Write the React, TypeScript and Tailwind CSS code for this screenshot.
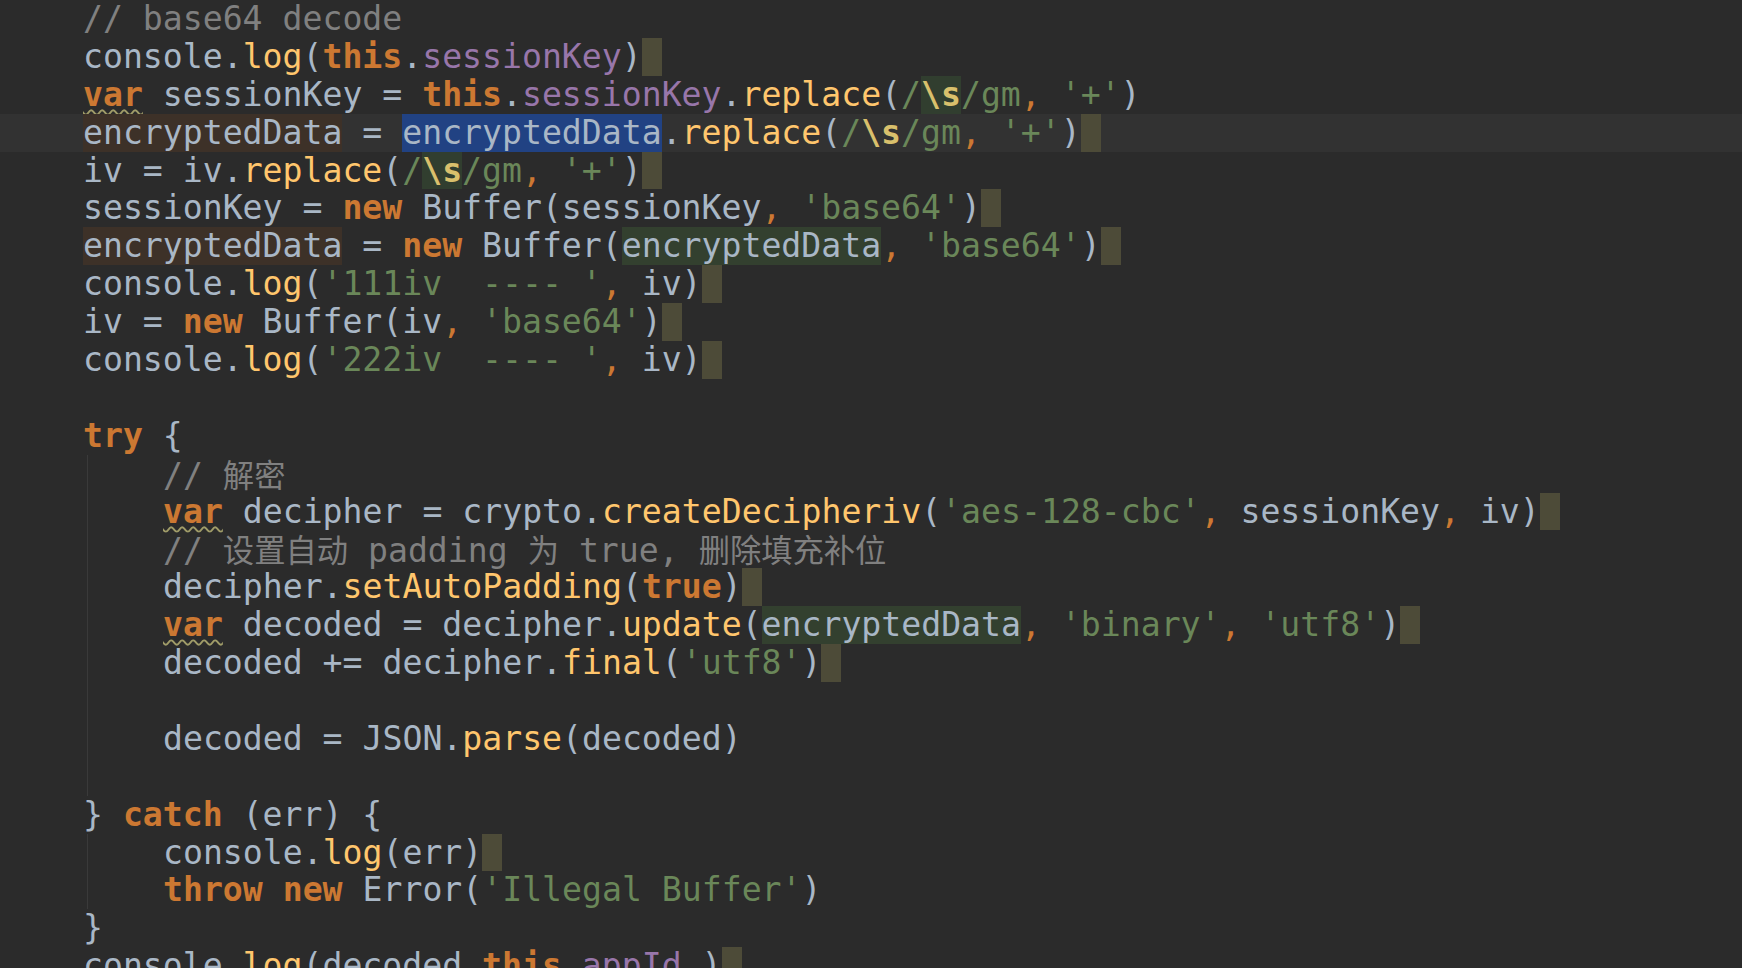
import { ReactNode } from "react";
import clsx from "clsx";

// darcula-ish editor tokens
const K = ({ children }: { children: ReactNode }) => (
    <span className="font-bold text-[#cc7832]">{children}</span>
);
const Fn = ({ children }: { children: ReactNode }) => <span className="text-[#ffc66d]">{children}</span>;
const Str = ({ children }: { children: ReactNode }) => <span className="text-[#6a8759]">{children}</span>;
const Field = ({ children }: { children: ReactNode }) => <span className="text-[#9876aa]">{children}</span>;
const Comma = () => <span className="text-[#cc7832]">,</span>;
const Cjk = ({ children }: { children: ReactNode }) => (
    <span className="font-['Noto_Sans_CJK_SC',sans-serif] text-[31.3px]">{children}</span>
);

// warning squiggle under `var`
const Var = () => (
    <span className="font-bold text-[#cc7832] underline decoration-wavy decoration-[#a09c68] decoration-[1.5px] underline-offset-[3px]">
        var
    </span>
);

// end of line marker (missing semicolon)
const Mark = () => <span className="inline-block w-[20px] h-[37.9px] align-top bg-[#4d4b38]" />;

const Regex = ({ hl }: { hl?: boolean }) => (
    <>
        <Str>/</Str>
        <span className={clsx("inline-block font-bold text-[#d9c06c]", hl && "bg-[#313e2f]")}>\s</span>
        <Str>/gm</Str>
    </>
);

const Write = ({ children }: { children: ReactNode }) => (
    <span className="inline-block bg-[#3d3128]">{children}</span>
);
const Read = ({ children }: { children: ReactNode }) => (
    <span className="inline-block bg-[#33402f]">{children}</span>
);

const Line = ({ children, current, flat }: { children?: ReactNode; current?: boolean; flat?: boolean }) => (
    <div
        className={clsx(
            "h-[37.9px] leading-[37.9px] whitespace-pre",
            !flat && "pl-[83px]",
            current && "bg-[#323232]"
        )}
    >
        {children}
    </div>
);

// lines inside a { } block, with the indent guide on the left
const Block = ({ children }: { children: ReactNode }) => (
    <div className="ml-[87px] border-l border-[#3a3a3a] pl-[75px]">{children}</div>
);

export default function App() {
    return (
        <div className="h-[968px] w-full overflow-hidden bg-[#2b2b2b] font-['DejaVu_Sans_Mono','Noto_Sans_CJK_SC',monospace] text-[33.15px] text-[#a9b7c6]">
            <Line>
                <span className="text-[#808080]">// base64 decode</span>
            </Line>
            <Line>
                console.<Fn>log</Fn>(<K>this</K>.<Field>sessionKey</Field>)<Mark />
            </Line>
            <Line>
                <Var /> sessionKey = <K>this</K>.<Field>sessionKey</Field>.<Fn>replace</Fn>(<Regex hl />
                <Comma /> <Str>'+'</Str>)
            </Line>
            <Line current>
                <Write>encryptedData</Write> = <span className="inline-block bg-[#214283]">encryptedData</span>.
                <Fn>replace</Fn>(<Regex />
                <Comma /> <Str>'+'</Str>)<Mark />
            </Line>
            <Line>
                iv = iv.<Fn>replace</Fn>(<Regex hl />
                <Comma /> <Str>'+'</Str>)<Mark />
            </Line>
            <Line>
                sessionKey = <K>new</K> Buffer(sessionKey<Comma /> <Str>'base64'</Str>)<Mark />
            </Line>
            <Line>
                <Write>encryptedData</Write> = <K>new</K> Buffer(<Read>encryptedData</Read>
                <Comma /> <Str>'base64'</Str>)<Mark />
            </Line>
            <Line>
                console.<Fn>log</Fn>(<Str>'111iv  ---- '</Str>
                <Comma /> iv)<Mark />
            </Line>
            <Line>
                iv = <K>new</K> Buffer(iv<Comma /> <Str>'base64'</Str>)<Mark />
            </Line>
            <Line>
                console.<Fn>log</Fn>(<Str>'222iv  ---- '</Str>
                <Comma /> iv)<Mark />
            </Line>
            <Line />
            <Line>
                <K>try</K> {"{"}
            </Line>
            <Block>
                <Line flat>
                    <span className="text-[#808080]">
                        // <Cjk>解密</Cjk>
                    </span>
                </Line>
                <Line flat>
                    <Var /> decipher = crypto.<Fn>createDecipheriv</Fn>(<Str>'aes-128-cbc'</Str>
                    <Comma /> sessionKey<Comma /> iv)<Mark />
                </Line>
                <Line flat>
                    <span className="text-[#808080]">
                        // <Cjk>设置自动</Cjk> padding <Cjk>为</Cjk> true, <Cjk>删除填充补位</Cjk>
                    </span>
                </Line>
                <Line flat>
                    decipher.<Fn>setAutoPadding</Fn>(<K>true</K>)<Mark />
                </Line>
                <Line flat>
                    <Var /> decoded = decipher.<Fn>update</Fn>(<Read>encryptedData</Read>
                    <Comma /> <Str>'binary'</Str>
                    <Comma /> <Str>'utf8'</Str>)<Mark />
                </Line>
                <Line flat>
                    decoded += decipher.<Fn>final</Fn>(<Str>'utf8'</Str>)<Mark />
                </Line>
                <Line flat />
                <Line flat>
                    decoded = JSON.<Fn>parse</Fn>(decoded)
                </Line>
                <Line flat />
            </Block>
            <Line>
                {"} "}
                <K>catch</K> (err) {"{"}
            </Line>
            <Block>
                <Line flat>
                    console.<Fn>log</Fn>(err)<Mark />
                </Line>
                <Line flat>
                    <K>throw</K> <K>new</K> Error(<Str>'Illegal Buffer'</Str>)
                </Line>
            </Block>
            <Line>{"}"}</Line>
            <Line>
                console.<Fn>log</Fn>(decoded<Comma />
                <K>this</K>.<Field>appId</Field> )<Mark />
            </Line>
        </div>
    );
}
